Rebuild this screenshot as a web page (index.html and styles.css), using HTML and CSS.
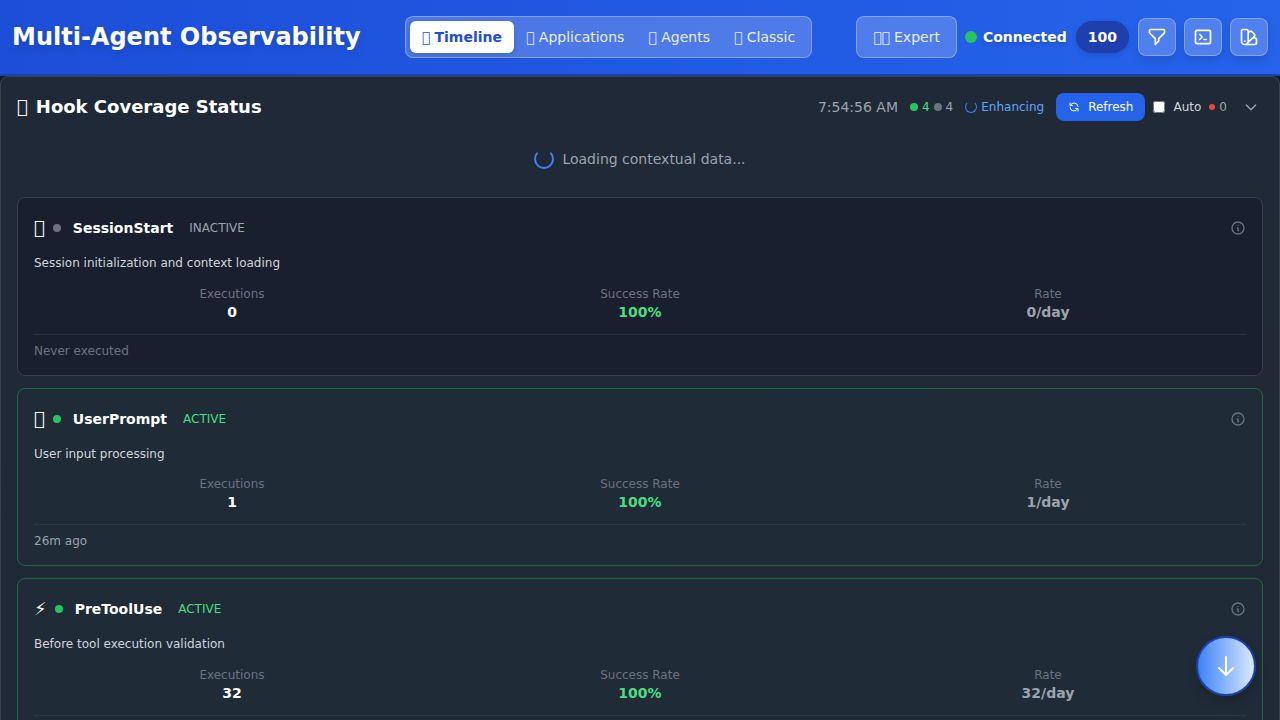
FILE: index.html
```html
<!DOCTYPE html>
<html lang="en">
<head>
<meta charset="utf-8">
<title>Multi-Agent Observability</title>
<link rel="stylesheet" href="styles.css">
</head>
<body>
<header class="topbar">
  <h1 class="brand">Multi-Agent Observability</h1>
  <nav class="tabs">
    <button class="tab active"><span class="emoji">&#x10FFFD;</span><span>Timeline</span></button>
    <button class="tab"><span class="emoji">&#x10FFFD;</span><span>Applications</span></button>
    <button class="tab"><span class="emoji">&#x10FFFD;</span><span>Agents</span></button>
    <button class="tab"><span class="emoji">&#x10FFFD;</span><span>Classic</span></button>
  </nav>
  <div class="actions">
    <button class="expert"><span class="emoji">&#x10FFFD;&#x10FFFD;</span><span>Expert</span></button>
    <div class="connection"><i class="dot live"></i><span>Connected</span></div>
    <span class="count">100</span>
    <button class="square"><svg viewBox="0 0 24 24"><path d="M3 4a1 1 0 0 1 1-1h16a1 1 0 0 1 1 1v2.586a1 1 0 0 1-.293.707l-6.414 6.414a1 1 0 0 0-.293.707V17l-4 4v-6.586a1 1 0 0 0-.293-.707L3.293 7.293A1 1 0 0 1 3 6.586V4z"/></svg></button>
    <button class="square"><svg viewBox="0 0 24 24"><path d="M8 9l3 3-3 3m5 0h3M5 20h14a2 2 0 0 0 2-2V6a2 2 0 0 0-2-2H5a2 2 0 0 0-2 2v12a2 2 0 0 0 2 2z"/></svg></button>
    <button class="square"><svg viewBox="0 0 24 24"><path d="M7 21a4 4 0 0 1-4-4V5a2 2 0 0 1 2-2h4a2 2 0 0 1 2 2v12a4 4 0 0 1-4 4zm0 0h12a2 2 0 0 0 2-2v-4a2 2 0 0 0-2-2h-2.343M11 7.343l1.657-1.657a2 2 0 0 1 2.828 0l2.829 2.829a2 2 0 0 1 0 2.828l-8.486 8.485M7 17h.01"/></svg></button>
  </div>
</header>
<main class="panel">
  <div class="panel-head">
    <h2 class="panel-title"><span>&#x10FFFD;</span><span>Hook Coverage Status</span></h2>
    <div class="tools">
      <span class="clock">7:54:56 AM</span>
      <div class="totals"><i class="dot green"></i><span class="good">4</span><i class="dot gray"></i><span>4</span></div>
      <div class="enhancing"><i class="spinner small"></i><span>Enhancing</span></div>
      <button class="refresh"><svg viewBox="0 0 24 24"><path d="M4 4v5h.582m15.356 2A8.001 8.001 0 0 0 4.582 9m0 0H9m11 11v-5h-.581m0 0a8.003 8.003 0 0 1-15.357-2m15.357 2H15"/></svg><span>Refresh</span></button>
      <label class="auto"><input type="checkbox"><span>Auto</span></label>
      <div class="errors"><i class="dot red"></i><span>0</span></div>
      <button class="chevron"><svg viewBox="0 0 24 24"><path d="M19 9l-7 7-7-7"/></svg></button>
    </div>
  </div>
  <div class="loading"><i class="spinner"></i><span>Loading contextual data...</span></div>
  <section class="cards">
    <article class="card">
      <div class="card-head"><span class="card-icon">&#x10FFFD;</span><i class="dot gray"></i><h3>SessionStart</h3><span class="status">INACTIVE</span><svg class="info" viewBox="0 0 24 24"><path d="M13 16h-1v-4h-1m1-4h.01M21 12a9 9 0 1 1-18 0 9 9 0 0 1 18 0z"/></svg></div>
      <p class="desc">Session initialization and context loading</p>
      <div class="metrics">
        <div><span>Executions</span><b>0</b></div>
        <div><span>Success Rate</span><b class="good">100%</b></div>
        <div><span>Rate</span><b class="muted">0/day</b></div>
      </div>
      <div class="last never">Never executed</div>
    </article>
    <article class="card on">
      <div class="card-head"><span class="card-icon">&#x10FFFD;</span><i class="dot green"></i><h3>UserPrompt</h3><span class="status">ACTIVE</span><svg class="info" viewBox="0 0 24 24"><path d="M13 16h-1v-4h-1m1-4h.01M21 12a9 9 0 1 1-18 0 9 9 0 0 1 18 0z"/></svg></div>
      <p class="desc">User input processing</p>
      <div class="metrics">
        <div><span>Executions</span><b>1</b></div>
        <div><span>Success Rate</span><b class="good">100%</b></div>
        <div><span>Rate</span><b class="muted">1/day</b></div>
      </div>
      <div class="last">26m ago</div>
    </article>
    <article class="card on">
      <div class="card-head"><span class="card-icon">⚡</span><i class="dot green"></i><h3>PreToolUse</h3><span class="status">ACTIVE</span><svg class="info" viewBox="0 0 24 24"><path d="M13 16h-1v-4h-1m1-4h.01M21 12a9 9 0 1 1-18 0 9 9 0 0 1 18 0z"/></svg></div>
      <p class="desc">Before tool execution validation</p>
      <div class="metrics">
        <div><span>Executions</span><b>32</b></div>
        <div><span>Success Rate</span><b class="good">100%</b></div>
        <div><span>Rate</span><b class="muted">32/day</b></div>
      </div>
      <div class="last"></div>
    </article>
  </section>
</main>
<button class="to-bottom"><svg viewBox="0 0 24 24"><path d="M19 14l-7 7m0 0l-7-7m7 7V3"/></svg></button>
</body>
</html>
```

FILE: styles.css
```css
* { box-sizing: border-box; margin: 0; }
body {
  height: 720px;
  overflow: hidden;
  background: #111827;
  color: #fff;
  font: 14px/20px "DejaVu Sans", sans-serif;
}
button { font: inherit; color: inherit; border: 0; background: none; padding: 0; }
svg { fill: none; stroke: currentColor; stroke-width: 2; stroke-linecap: round; stroke-linejoin: round; display: block; flex: none; }
i { flex: none; }

.topbar {
  height: 76px;
  padding: 0 12px;
  display: flex;
  align-items: center;
  justify-content: space-between;
  background: linear-gradient(to right, #1d4ed8, #2563eb);
  border-bottom: 2px solid #1e40af;
}
.brand { font-size: 24px; line-height: 32px; font-weight: 700; white-space: nowrap; text-shadow: 0 4px 8px rgba(0, 0, 0, .12); }
.tabs {
  display: flex;
  height: 42px;
  padding: 4px;
  border: 1px solid rgba(255, 255, 255, .3);
  border-radius: 8px;
  background: rgba(255, 255, 255, .2);
}
.tab { display: flex; align-items: center; gap: 4.45px; padding: 0 12px; border-radius: 6px; color: rgba(255, 255, 255, .9); }
.tab.active { background: #fff; color: #1d4ed8; font-weight: 700; box-shadow: 0 2px 5px rgba(0, 0, 0, .15); }
.emoji { font-weight: 400; white-space: nowrap; }
.actions { display: flex; align-items: center; flex: none; }
.expert {
  display: flex;
  align-items: center;
  gap: 4px;
  height: 42px;
  padding: 0 16px;
  border: 1px solid rgba(255, 255, 255, .3);
  border-radius: 8px;
  background: rgba(255, 255, 255, .2);
  color: rgba(255, 255, 255, .9);
}
.connection { display: flex; align-items: center; gap: 6px; margin: 0 9px 0 8px; font-weight: 700; text-shadow: 0 2px 4px rgba(0, 0, 0, .2); }
.dot { width: 8px; height: 8px; border-radius: 50%; background: #6b7280; }
.dot.live { width: 12px; height: 12px; background: #22c55e; }
.dot.green { background: #22c55e; }
.dot.red { width: 6px; height: 6px; background: #ef4444; }
.count { padding: 6px 12px; border-radius: 16px; background: #1e40af; font-weight: 700; box-shadow: 0 2px 5px rgba(0, 0, 0, .15); margin-right: 9px; }
.square {
  width: 38px;
  height: 38px;
  flex: none;
  display: grid;
  place-items: center;
  border: 1px solid rgba(255, 255, 255, .3);
  border-radius: 8px;
  background: rgba(255, 255, 255, .2);
  box-shadow: 0 5px 10px rgba(0, 0, 0, .1);
}
.square + .square { margin-left: 8px; }
.square svg { width: 20px; height: 20px; }

.panel { height: 644px; overflow: hidden; padding: 16px 16px 0; border: 1px solid #374151; border-bottom: 0; border-radius: 8px 8px 0 0; background: linear-gradient(to bottom right, #1f2937, #212936); }
.panel-head { height: 28px; display: flex; align-items: center; justify-content: space-between; }
.panel-title { display: flex; gap: 8px; font-size: 18px; line-height: 28px; font-weight: 700; }
.tools { display: flex; align-items: center; font-size: 12px; line-height: 16px; color: #9ca3af; }
.clock { font-size: 14px; margin-right: 12px; }
.totals, .enhancing, .errors { display: flex; align-items: center; gap: 4px; }
.good { color: #4ade80; }
.enhancing { margin: 0 12px; color: #60a5fa; }
.refresh { display: flex; align-items: center; gap: 8px; height: 28px; padding: 0 12px; border-radius: 8px; background: #2563eb; color: #fff; }
.refresh svg { width: 12px; height: 12px; }
.auto { display: flex; align-items: center; gap: 8px; margin: 0 8px; color: #d1d5db; }
.auto input { width: 12px; height: 12px; margin: 0; }
.chevron { margin: 0 4px 0 16px; color: #9ca3af; }
.chevron svg { width: 16px; height: 16px; }
.spinner { width: 20px; height: 20px; border: 2px solid #3b82f6; border-top-color: transparent; border-radius: 50%; }
.spinner.small { width: 12px; height: 12px; border-width: 1px; border-top-color: transparent; }
.loading { display: flex; justify-content: center; align-items: center; gap: 8px; padding: 28px 0; color: #9ca3af; }

.cards { display: grid; gap: 12px; }
.card { padding: 16px; border: 1px solid #374151; border-radius: 8px; background: #191f2e; }
.card.on { border-color: #1c6a41; background: #1f2c37; }
.card-head { display: flex; align-items: center; height: 28px; }
.card-icon { font-size: 18px; line-height: 28px; margin-right: 8px; }
.card h3 { font-size: 14px; font-weight: 700; margin: 0 16px 0 12px; }
.status { font-size: 12px; color: #9ca3af; }
.on .status { color: #4ade80; }
.info { width: 16px; height: 16px; margin-left: auto; color: #6b7280; }
.desc { margin: 12px 0; font-size: 12px; line-height: 19.5px; color: #d1d5db; }
.metrics { display: grid; grid-template-columns: repeat(3, 1fr); gap: 12px; text-align: center; }
.metrics span { display: block; font-size: 12px; line-height: 16px; color: #6b7280; }
.metrics b { display: block; }
.metrics .muted { color: #9ca3af; }
.last { margin-top: 12px; padding-top: 8px; border-top: 1px solid rgba(55, 65, 81, .5); font-size: 12px; line-height: 16px; color: #9ca3af; }
.last.never { color: #6b7280; }

.to-bottom {
  position: fixed;
  right: 24px;
  bottom: 24px;
  width: 60px;
  height: 60px;
  display: grid;
  place-items: center;
  border: 2px solid #1e40af;
  border-radius: 50%;
  background: linear-gradient(to right, #3b82f6, #dbeafe);
  box-shadow: 0 6px 12px rgba(0, 0, 0, .2);
}
.to-bottom svg { width: 24px; height: 24px; }
```
